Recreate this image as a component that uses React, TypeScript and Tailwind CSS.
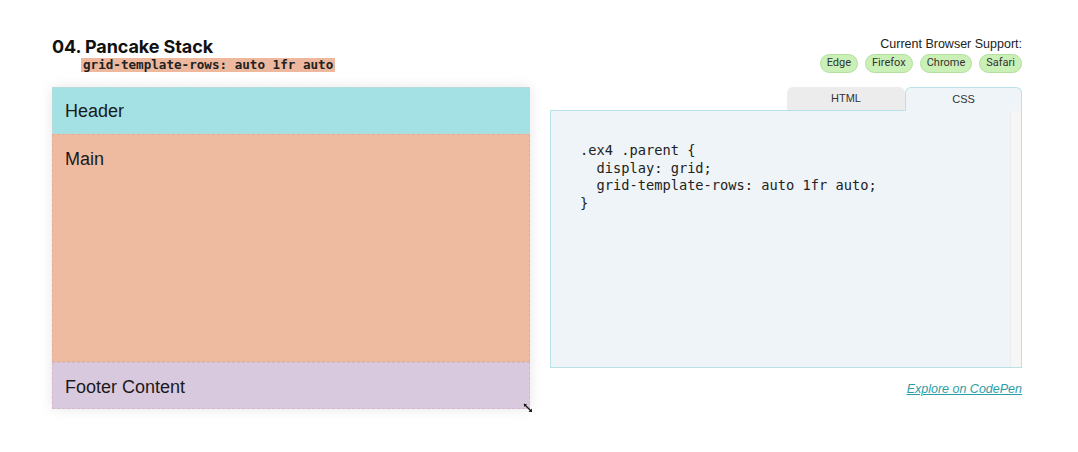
const browsers = ["Edge", "Firefox", "Chrome", "Safari"];

const cssLines = [
  ".ex4 .parent {",
  "  display: grid;",
  "  grid-template-rows: auto 1fr auto;",
  "}",
];

const ResizeHandle = () => (
  <svg width="10" height="10" viewBox="0 0 10 10" className="absolute -right-[3px] -bottom-[4px]">
    <path d="M1 1 L8.5 8.5" stroke="#111" strokeWidth="1.3" />
    <path d="M1 1 L4 1.3 L1.3 4 Z" fill="#111" />
    <path d="M9 9 L5.5 8.7 L8.7 5.5 Z" fill="#111" />
  </svg>
);

const App = () => {
  return (
    <div className="w-[1078px] h-[452px] bg-white pt-[36px] pl-[52px] font-['Liberation_Sans',Arial,sans-serif] text-[#1a1a1a]">
      <div className="w-[970px]">
        {/* top row */}
        <div className="flex justify-between h-[51px]">
          <div>
            <h2 className="font-['Inter',sans-serif] font-bold text-[18px] leading-[22px] text-[#111] tracking-[-0.1px]">
              04. Pancake Stack
            </h2>
            <code className="ml-[29px] block w-fit bg-[#eeb89e] px-[2px] font-['DejaVu_Sans_Mono',monospace] font-bold text-[12.6px] leading-[14px] text-[#222]">
              grid-template-rows: auto 1fr auto
            </code>
          </div>
          <div className="flex flex-col items-end">
            <p className="text-[12.5px] leading-[14px] mt-[1px] text-[#222]">Current Browser Support:</p>
            <div className="flex gap-[7px] mt-[3px]">
              {browsers.map((b) => (
                <span
                  key={b}
                  className="h-[19px] px-[6px] flex items-center rounded-full bg-[#caf0b8] border border-[#b2e09c] font-['Roboto',sans-serif] text-[11px] text-[#333]"
                >
                  {b}
                </span>
              ))}
            </div>
          </div>
        </div>

        {/* main row */}
        <div className="flex gap-[20px]">
          <div className="relative w-[478px] h-[322px] grid grid-rows-[47px_1fr_47px] shadow-[0_0_12px_rgba(0,0,0,0.10)] text-[18px] leading-[22px] text-[#1a1a1a]">
            <div className="bg-[#a4e1e4] border border-dashed border-[#bfd8da] px-[12px] pt-[12px]">Header</div>
            <div className="bg-[#eebba0] border border-dashed border-[#e0b09a] px-[12px] pt-[13px]">Main</div>
            <div className="bg-[#d9c9df] border border-dashed border-[#d7b8c9] px-[12px] pt-[13px]">Footer Content</div>
            <ResizeHandle />
          </div>

          <div className="w-[472px] flex flex-col">
            <div className="flex justify-end h-[23px]">
              <div className="w-[118px] h-[23px] bg-[#ececec] rounded-t-[6px] flex items-center justify-center text-[11px] text-[#333]">
                HTML
              </div>
              <div className="w-[117px] h-[24px] bg-[#eef4f7] border border-b-0 border-[#b9e2e8] rounded-t-[6px] flex items-center justify-center text-[11px] text-[#333] relative z-10">
                CSS
              </div>
            </div>
            <div className="h-[258px] bg-[#eef4f7] border border-[#b9e2e8] flex">
              <pre className="flex-1 pl-[29px] pt-[31px] font-['DejaVu_Sans_Mono',monospace] text-[13.7px] leading-[17.6px] text-[#222]">
                {cssLines.join("\n")}
              </pre>
              <div className="w-[11px] bg-[#f6f6f6] border-l border-[#ececec]" />
            </div>
            <div className="flex justify-end mt-[12px]">
              <a className="italic underline text-[12.5px] text-[#2e9ea6]">Explore on CodePen</a>
            </div>
          </div>
        </div>
      </div>
    </div>
  );
};

export default App;
